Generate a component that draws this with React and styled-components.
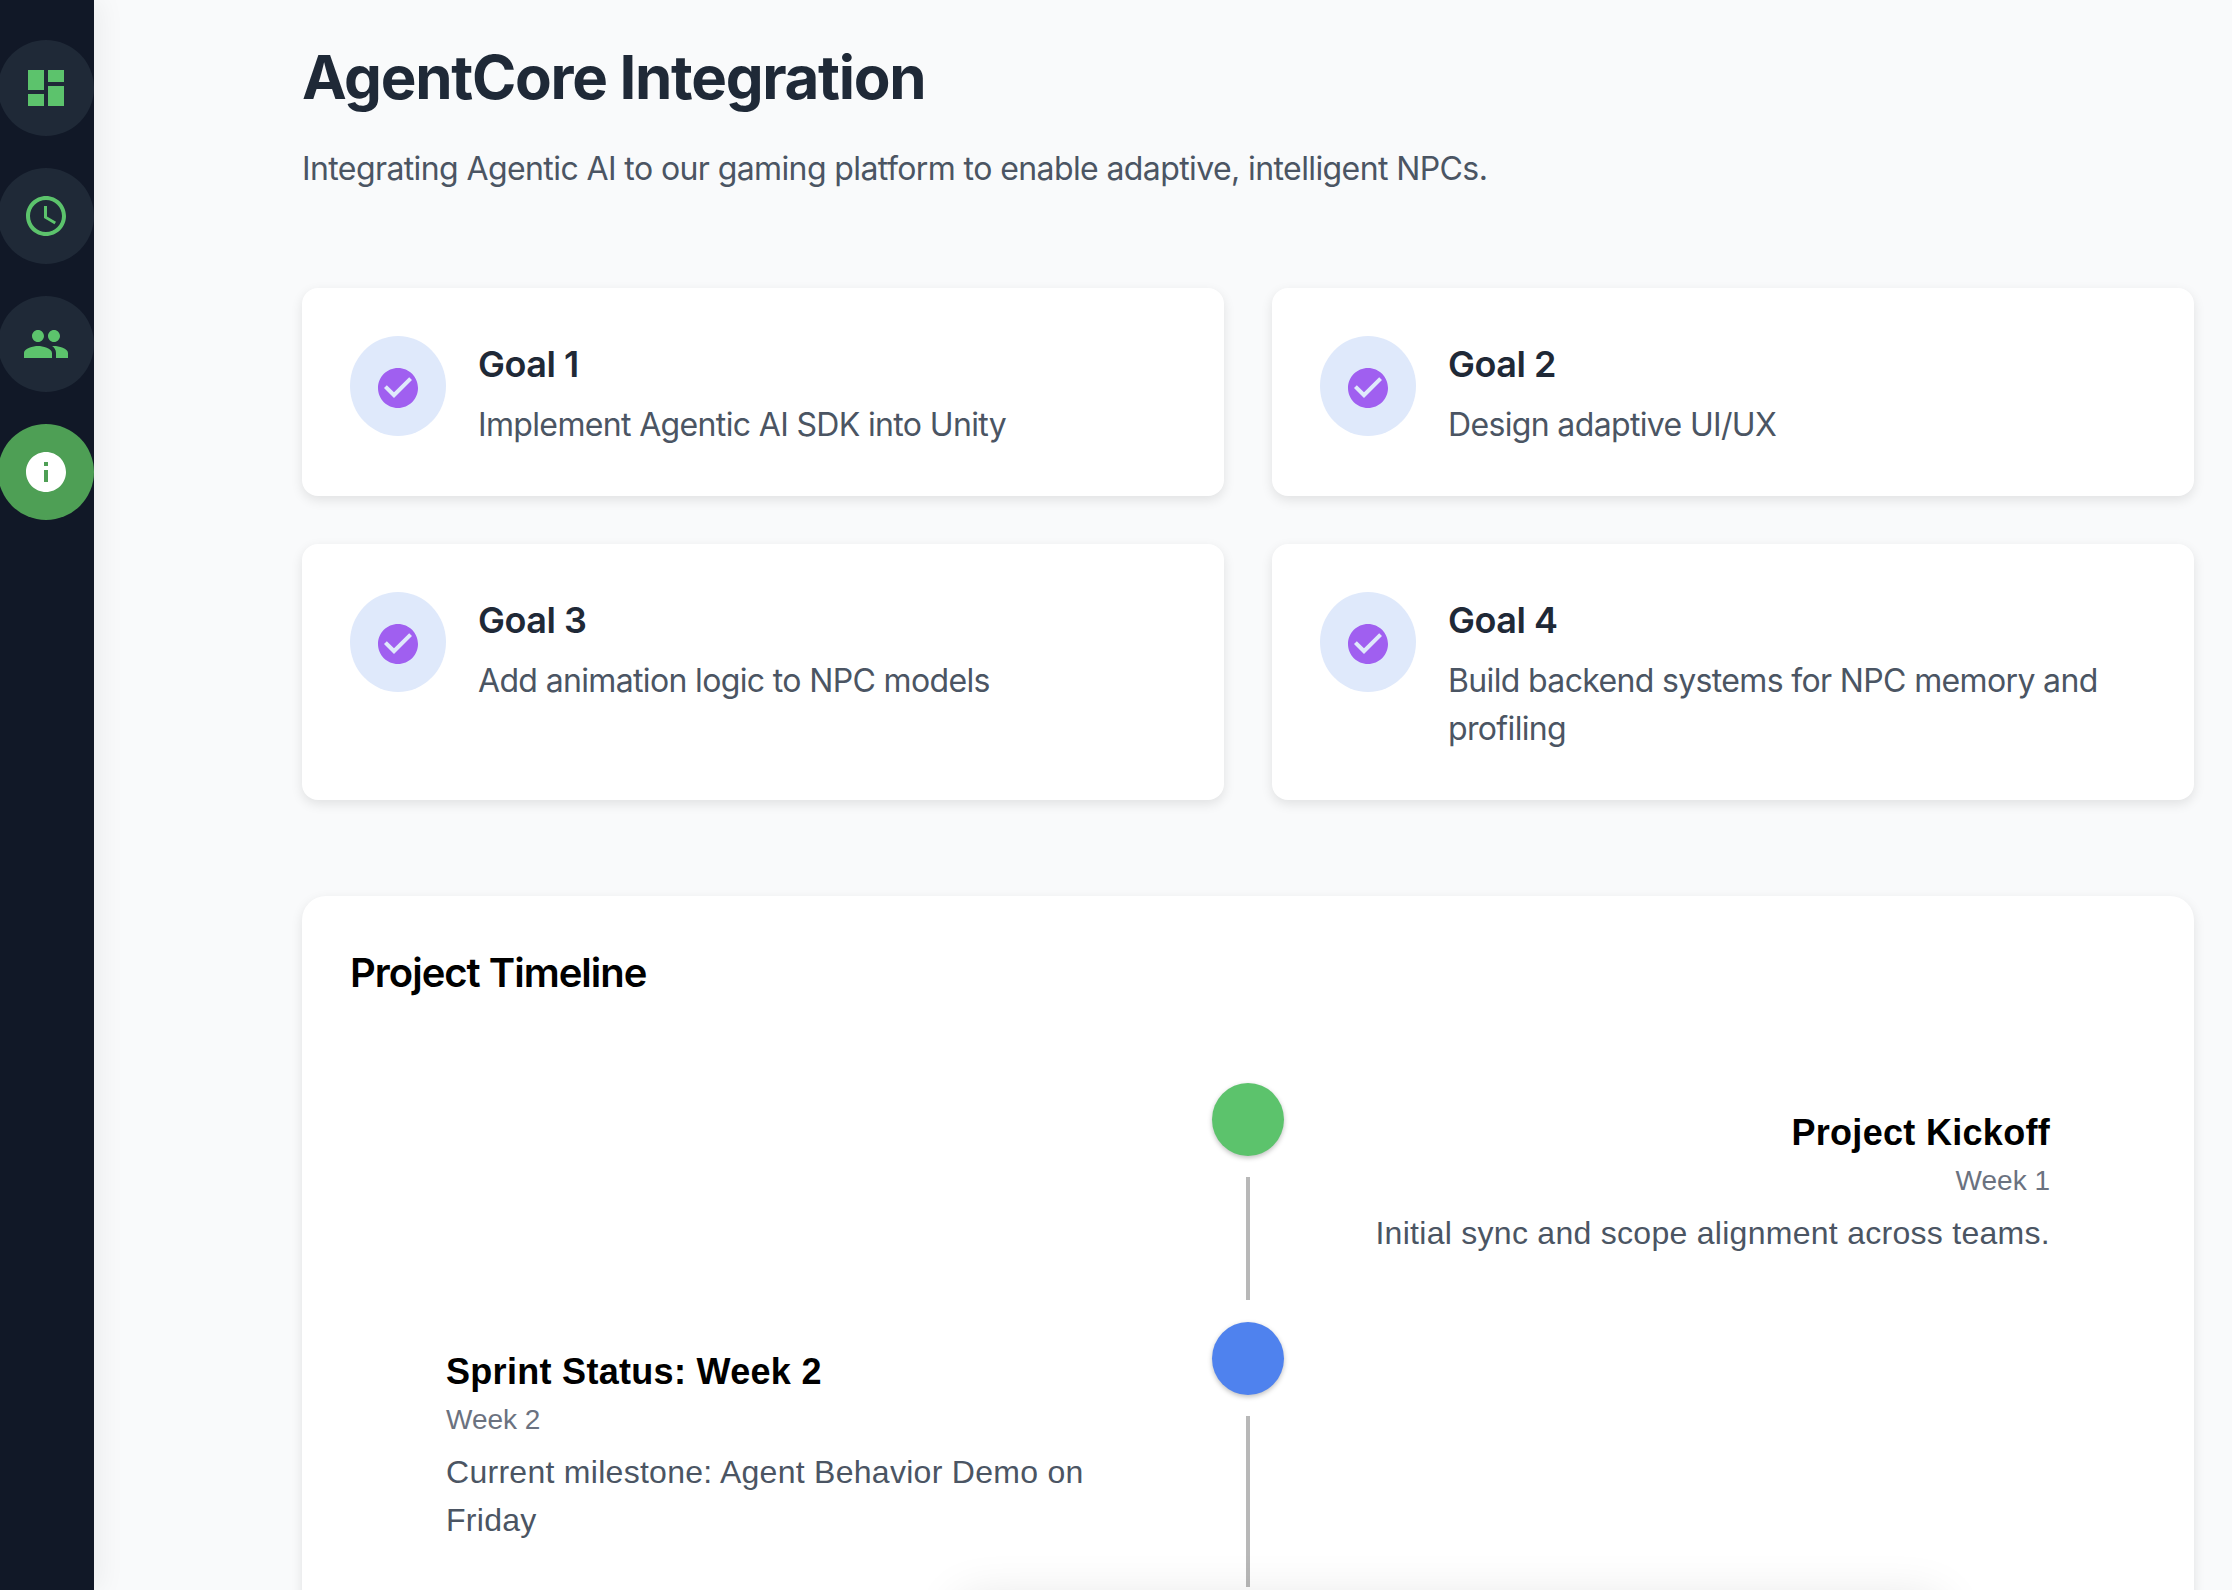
import React from 'react';
import styled, { createGlobalStyle } from 'styled-components';
import { MdDashboard, MdAccessTime, MdPeople, MdInfo, MdCheckCircle } from 'react-icons/md';

const GlobalStyle = createGlobalStyle`
  html, body {
    margin: 0;
    padding: 0;
    height: 100%;
    overflow: hidden;
    background: #f9fafb;
    font-family: Inter, "Liberation Sans", sans-serif;
  }
  * { box-sizing: border-box; }
`;

const Page = styled.div`
  position: relative;
  display: flex;
  height: 1590px;
  overflow: hidden;
`;

const Sidebar = styled.nav`
  flex: 0 0 94px;
  min-width: 94px;
  width: 94px;
  display: flex;
  flex-direction: column;
  align-items: flex-start;
  gap: 32px;
  padding-top: 40px;
  background: #111827;
  box-shadow: 8px 0 24px rgba(0, 0, 0, 0.05);
  z-index: 1;
`;

const NavButton = styled.div`
  flex: 0 0 96px;
  width: 96px;
  height: 96px;
  margin-left: -2px;
  display: flex;
  align-items: center;
  justify-content: center;
  border-radius: 50%;
  color: ${(p) => (p.$active ? '#fff' : '#5cc36c')};
  background: ${(p) => (p.$active ? '#4e9f55' : '#1f2937')};
  font-size: 48px;
`;

const Main = styled.main`
  flex: 1;
  min-width: 0;
  padding: 41px 38px 0 208px;
`;

const Title = styled.h1`
  margin: 0 0 32px;
  font-size: 60px;
  line-height: 72px;
  font-weight: 700;
  letter-spacing: -1.3px;
  color: #1f2937;
`;

const Subtitle = styled.p`
  margin: 0 0 95px;
  font-size: 32px;
  line-height: 48px;
  letter-spacing: -0.6px;
  color: #4b5563;
`;

const GoalGrid = styled.section`
  display: grid;
  grid-template-columns: 1fr 1fr;
  gap: 48px;
  margin-bottom: 96px;
`;

const GoalCard = styled.article`
  display: flex;
  gap: 32px;
  padding: 48px 48px 47px;
  background: #fff;
  border-radius: 16px;
  box-shadow: 0 4px 12px rgba(0, 0, 0, 0.1);
`;

const GoalIcon = styled.div`
  flex: 0 0 96px;
  height: 100px;
  padding-top: 4px;
  display: flex;
  align-items: center;
  justify-content: center;
  border-radius: 50%;
  background: #dfe9fb;
  color: #a05ff0;
  font-size: 48px;
`;

const GoalTitle = styled.h3`
  margin: 0 0 9px;
  font-size: 36px;
  line-height: 56px;
  font-weight: 600;
  letter-spacing: -0.5px;
  color: #1f2937;
`;

const GoalText = styled.p`
  margin: 0;
  font-size: 32px;
  line-height: 48px;
  letter-spacing: -0.65px;
  color: #4b5563;
`;

const TimelineCard = styled.section`
  padding: 49px 48px 48px;
  height: 1200px;
  background: #fff;
  border-radius: 24px;
  box-shadow: 0 4px 12px rgba(0, 0, 0, 0.1);
`;

const TimelineTitle = styled.h2`
  margin: 0 0 82px;
  font-size: 40px;
  line-height: 56px;
  font-weight: 600;
  letter-spacing: -1px;
  color: #000;
`;

const TimelineRow = styled.div`
  display: grid;
  grid-template-columns: 1fr 72px 1fr;
  height: ${(p) => p.$height}px;
`;

const TimelineText = styled.div`
  grid-column: ${(p) => (p.$right ? 3 : 1)};
  grid-row: 1;
  padding: ${(p) => (p.$right ? '22px 96px 0 64px' : '22px 96px 0')};
  text-align: ${(p) => (p.$right ? 'right' : 'left')};
  font-family: "Liberation Sans", Arial, sans-serif;
`;

const EventTitle = styled.h4`
  margin: 0;
  font-size: 36px;
  line-height: 56px;
  font-weight: 700;
  letter-spacing: 0.3px;
  color: #000;
`;

const EventWeek = styled.div`
  margin-bottom: 8px;
  font-size: 28px;
  line-height: 40px;
  color: #6b7280;
`;

const EventText = styled.p`
  margin: 0;
  font-size: 32px;
  line-height: 48px;
  letter-spacing: 0.28px;
  color: #4b5563;
`;

const DotColumn = styled.div`
  grid-column: 2;
  grid-row: 1;
  display: flex;
  flex-direction: column;
  align-items: center;
`;

const Dot = styled.div`
  flex: 0 0 73px;
  width: 72px;
  border-radius: 50%;
  background: ${(p) => p.$color};
  box-shadow: 0 2px 5px rgba(0, 0, 0, 0.25);
`;

const Line = styled.div`
  flex: 1;
  width: 4px;
  margin: 21px 0 ${(p) => (p.$last ? 0 : 22)}px;
  background: #b8b8b8;
`;

// shadow of something sitting just below the fold
const BelowFoldShadow = styled.div`
  position: absolute;
  left: 960px;
  top: 1600px;
  width: 980px;
  height: 60px;
  box-shadow: 0 0 50px rgba(0, 0, 0, 0.12);
  pointer-events: none;
`;

const goals = [
  ['Goal 1', 'Implement Agentic AI SDK into Unity'],
  ['Goal 2', 'Design adaptive UI/UX'],
  ['Goal 3', 'Add animation logic to NPC models'],
  ['Goal 4', 'Build backend systems for NPC memory and profiling'],
];

export default function App() {
  return (
    <>
      <GlobalStyle />
      <Page>
        <Sidebar>
          <NavButton><MdDashboard /></NavButton>
          <NavButton><MdAccessTime /></NavButton>
          <NavButton><MdPeople /></NavButton>
          <NavButton $active><MdInfo /></NavButton>
        </Sidebar>
        <Main>
          <Title>AgentCore Integration</Title>
          <Subtitle>Integrating Agentic AI to our gaming platform to enable adaptive, intelligent NPCs.</Subtitle>
          <GoalGrid>
            {goals.map(([name, text]) => (
              <GoalCard key={name}>
                <GoalIcon><MdCheckCircle /></GoalIcon>
                <div>
                  <GoalTitle>{name}</GoalTitle>
                  <GoalText>{text}</GoalText>
                </div>
              </GoalCard>
            ))}
          </GoalGrid>
          <TimelineCard>
            <TimelineTitle>Project Timeline</TimelineTitle>
            <TimelineRow $height={239}>
              <DotColumn>
                <Dot $color="#5cc36c" />
                <Line />
              </DotColumn>
              <TimelineText $right>
                <EventTitle>Project Kickoff</EventTitle>
                <EventWeek>Week 1</EventWeek>
                <EventText>Initial sync and scope alignment across teams.</EventText>
              </TimelineText>
            </TimelineRow>
            <TimelineRow $height={265}>
              <TimelineText>
                <EventTitle>Sprint Status: Week 2</EventTitle>
                <EventWeek>Week 2</EventWeek>
                <EventText>Current milestone: Agent Behavior Demo on Friday</EventText>
              </TimelineText>
              <DotColumn>
                <Dot $color="#4f82ee" />
                <Line $last />
              </DotColumn>
            </TimelineRow>
          </TimelineCard>
        </Main>
        <BelowFoldShadow />
      </Page>
    </>
  );
}
